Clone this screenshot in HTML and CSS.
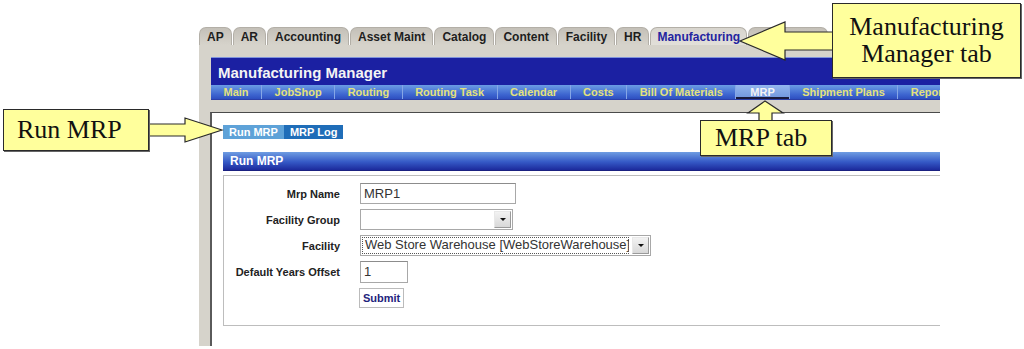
FILE: index.html
```html
<!DOCTYPE html>
<html>
<head>
    <title>Run MRP</title>
    <link rel="stylesheet" href="styles.css">
</head>
<body>
    <div class="shot">
        <div class="page">
            <div class="tabs">
                <span class="tab">AP</span>
                <span class="tab">AR</span>
                <span class="tab">Accounting</span>
                <span class="tab">Asset Maint</span>
                <span class="tab">Catalog</span>
                <span class="tab">Content</span>
                <span class="tab">Facility</span>
                <span class="tab">HR</span>
                <span class="tab selected">Manufacturing</span>
                <span class="tab blank"></span>
            </div>

            <div class="frame">
                <div class="app-header">Manufacturing Manager</div>
                <div class="subnav">
                    <span class="item">Main</span>
                    <span class="item">JobShop</span>
                    <span class="item">Routing</span>
                    <span class="item">Routing Task</span>
                    <span class="item">Calendar</span>
                    <span class="item">Costs</span>
                    <span class="item">Bill Of Materials</span>
                    <span class="item selected">MRP</span>
                    <span class="item">Shipment Plans</span>
                    <span class="item">Reports</span>
                </div>

                <div class="content">
                    <div class="subtabs">
                        <span class="subtab selected">Run MRP</span>
                        <span class="subtab">MRP Log</span>
                    </div>

                    <div class="panel">
                        <div class="panel-head">Run MRP</div>
                        <div class="panel-body">
                            <div class="form">
                                <label>Mrp Name</label>
                                <div class="field"><span class="input name">MRP1</span></div>

                                <label>Facility Group</label>
                                <div class="field">
                                    <span class="select group"><span class="value"></span><span class="btn"></span></span>
                                </div>

                                <label>Facility</label>
                                <div class="field">
                                    <span class="select facility"><span class="value focus">Web Store Warehouse [WebStoreWarehouse]</span><span class="btn"></span></span>
                                </div>

                                <label>Default Years Offset</label>
                                <div class="field"><span class="input offset">1</span></div>

                                <span></span>
                                <div class="field"><span class="submit">Submit</span></div>
                            </div>
                        </div>
                    </div>
                </div>
            </div>
        </div>
    </div>

    <!-- annotation arrows and callouts drawn over the screenshot -->
    <svg class="arrows" width="1024" height="349" viewBox="0 0 1024 349">
        <polygon points="740,41 785,22 785,32 834,32 834,50 785,50 785,60" />
        <polygon points="222,130 185,118 185,124 147,124 147,136 185,136 185,142" />
        <polygon points="765,101 783,113 772,113 772,122 759,122 759,113 748,113" />
    </svg>

    <div class="callout callout-tab">Manufacturing<br>Manager tab</div>
    <div class="callout callout-run">Run MRP</div>
    <div class="callout callout-mrp">MRP tab</div>
</body>
</html>
```

FILE: styles.css
```css
body {
    margin: 0;
    width: 1024px;
    height: 349px;
    position: relative;
    overflow: hidden;
    background: #fff;
    font-family: "Liberation Sans", Arial, sans-serif;
}

.shot {
    margin: 27px 0 0 199px;
    width: 741px;
    height: 319px;
    overflow: hidden;
}
.page {
    width: 800px;
}

/* top application tabs */
.tabs {
    display: flex;
    gap: 1px;
    height: 18px;
    align-items: flex-end;
}
.tab {
    height: 18px;
    line-height: 19px;
    padding: 0 7px;
    font-size: 12px;
    font-weight: bold;
    color: #1e1e1e;
    background: linear-gradient(#c4c0b8, #d6d3cb);
    border: 1px solid #b3afa7;
    border-bottom: none;
    border-radius: 7px 7px 0 0;
    box-sizing: border-box;
}
.tab.selected {
    background: linear-gradient(#d8d5ce, #e2dfd9);
    color: #2424a0;
    padding: 0 6px;
}
.tab.blank {
    width: 80px;
}

.frame {
    background: #d6d3cb;
    padding: 12px 0 0 12px;
    height: 301px;
    box-sizing: border-box;
}

.app-header {
    height: 28px;
    line-height: 29px;
    padding-left: 7px;
    background: #1b20a2;
    border-top: 1px solid #7f93dc;
    box-sizing: border-box;
    color: #f4f4f4;
    font-size: 15px;
    font-weight: bold;
}

.subnav {
    display: flex;
    height: 15px;
    background: linear-gradient(#6b9ce4, #3c64cf 70%, #2e4fc0);
    border-bottom: 1px solid #2b3fa8;
    box-sizing: border-box;
}
.subnav .item {
    padding: 0 12.5px;
    line-height: 14px;
    font-size: 11px;
    font-weight: bold;
    color: #e4e27c;
    border-right: 1px solid #86a6e6;
    white-space: nowrap;
}
.subnav .item.selected {
    background: linear-gradient(#94b6ee, #6f95dd);
    color: #f4f4f4;
    box-shadow: inset 0 -2px 0 #1a1a3c;
    padding: 0 14px;
}

.content {
    margin: 12px 0 0 -1px;
    background: #fff;
    border-top: 1px solid #4a4a4a;
    border-left: 2px solid #5a5a5a;
    padding: 12px 0 0 11px;
    height: 246px;
    box-sizing: border-box;
}

.subtabs {
    display: flex;
    height: 14px;
}
.subtab {
    padding: 0 6px;
    line-height: 14px;
    font-size: 11px;
    font-weight: bold;
    color: #fff;
    background: #1f6db8;
}
.subtab.selected {
    background: #5ea2d8;
}

.panel {
    margin-top: 13px;
}
.panel-head {
    height: 19px;
    line-height: 18px;
    padding-left: 7px;
    color: #fff;
    font-size: 12px;
    font-weight: bold;
    background: linear-gradient(#6f9de2, #3559c6 55%, #1c2a9c);
    border-bottom: 1px solid #1a2080;
    box-sizing: border-box;
}
.panel-body {
    margin-top: 4px;
    border: 1px solid #bdbdbd;
    padding: 7px 0 17px;
}

.form {
    display: grid;
    grid-template-columns: 116px 1fr;
    column-gap: 20px;
    row-gap: 5px;
    align-items: center;
}
.form label {
    text-align: right;
    font-size: 11px;
    font-weight: bold;
    color: #222;
}
.field {
    display: flex;
}

.input {
    height: 22px;
    line-height: 20px;
    padding-left: 3px;
    border: 1px solid #a8a8a8;
    border-top-color: #8c8c8c;
    box-sizing: border-box;
    font-size: 13px;
    color: #333;
}
.input.name { width: 156px; height: 21px; }
.input.offset { width: 48px; }

.select {
    display: flex;
    height: 21px;
    padding: 1px;
    border: 1px solid #a8a8a8;
    box-sizing: border-box;
    background: #fff;
}
.select.group { width: 153px; }
.select.facility { width: 291px; }
.select .value {
    flex: 1;
    font-size: 13px;
    line-height: 16px;
    color: #333;
    padding-left: 3px;
    white-space: nowrap;
    overflow: hidden;
}
.select .value.focus {
    outline: 1px dotted #555;
    outline-offset: -1px;
    padding-left: 3px;
    margin-right: 3px;
}
.select .btn {
    width: 17px;
    position: relative;
    background: linear-gradient(#f2f2f2, #d8d8d8);
    border: 1px solid #9a9a9a;
    border-top-color: #e8e8e8;
    border-left-color: #e8e8e8;
    box-sizing: border-box;
}
.select .btn::after {
    content: "";
    position: absolute;
    left: 5px;
    top: 6px;
    border-left: 3px solid transparent;
    border-right: 3px solid transparent;
    border-top: 3px solid #111;
}

.submit {
    height: 20px;
    line-height: 18px;
    padding: 0 3px;
    border: 1px solid #bbb;
    box-sizing: border-box;
    font-size: 11px;
    font-weight: bold;
    color: #23237c;
    margin-left: -1px;
}

/* callouts */
.arrows {
    position: absolute;
    left: 0;
    top: 0;
}
.arrows polygon {
    fill: #ffff9c;
    stroke: #2a2a2a;
    stroke-width: 1.2;
}
.callout {
    position: absolute;
    background: #ffff9c;
    border: 1px solid #2a2a2a;
    box-shadow: 1px 1px 0 #666;
    box-sizing: border-box;
    font-family: "Liberation Serif", "Times New Roman", serif;
    font-size: 26px;
    color: #111;
}
.callout-tab {
    left: 832px;
    top: 3px;
    width: 189px;
    height: 75px;
    text-align: center;
    line-height: 27px;
    padding-top: 9px;
}
.callout-run {
    left: 3px;
    top: 109px;
    width: 146px;
    height: 42px;
    line-height: 40px;
    padding-left: 13px;
}
.callout-mrp {
    left: 700px;
    top: 120px;
    width: 132px;
    height: 36px;
    line-height: 34px;
    padding-left: 14px;
}
```
